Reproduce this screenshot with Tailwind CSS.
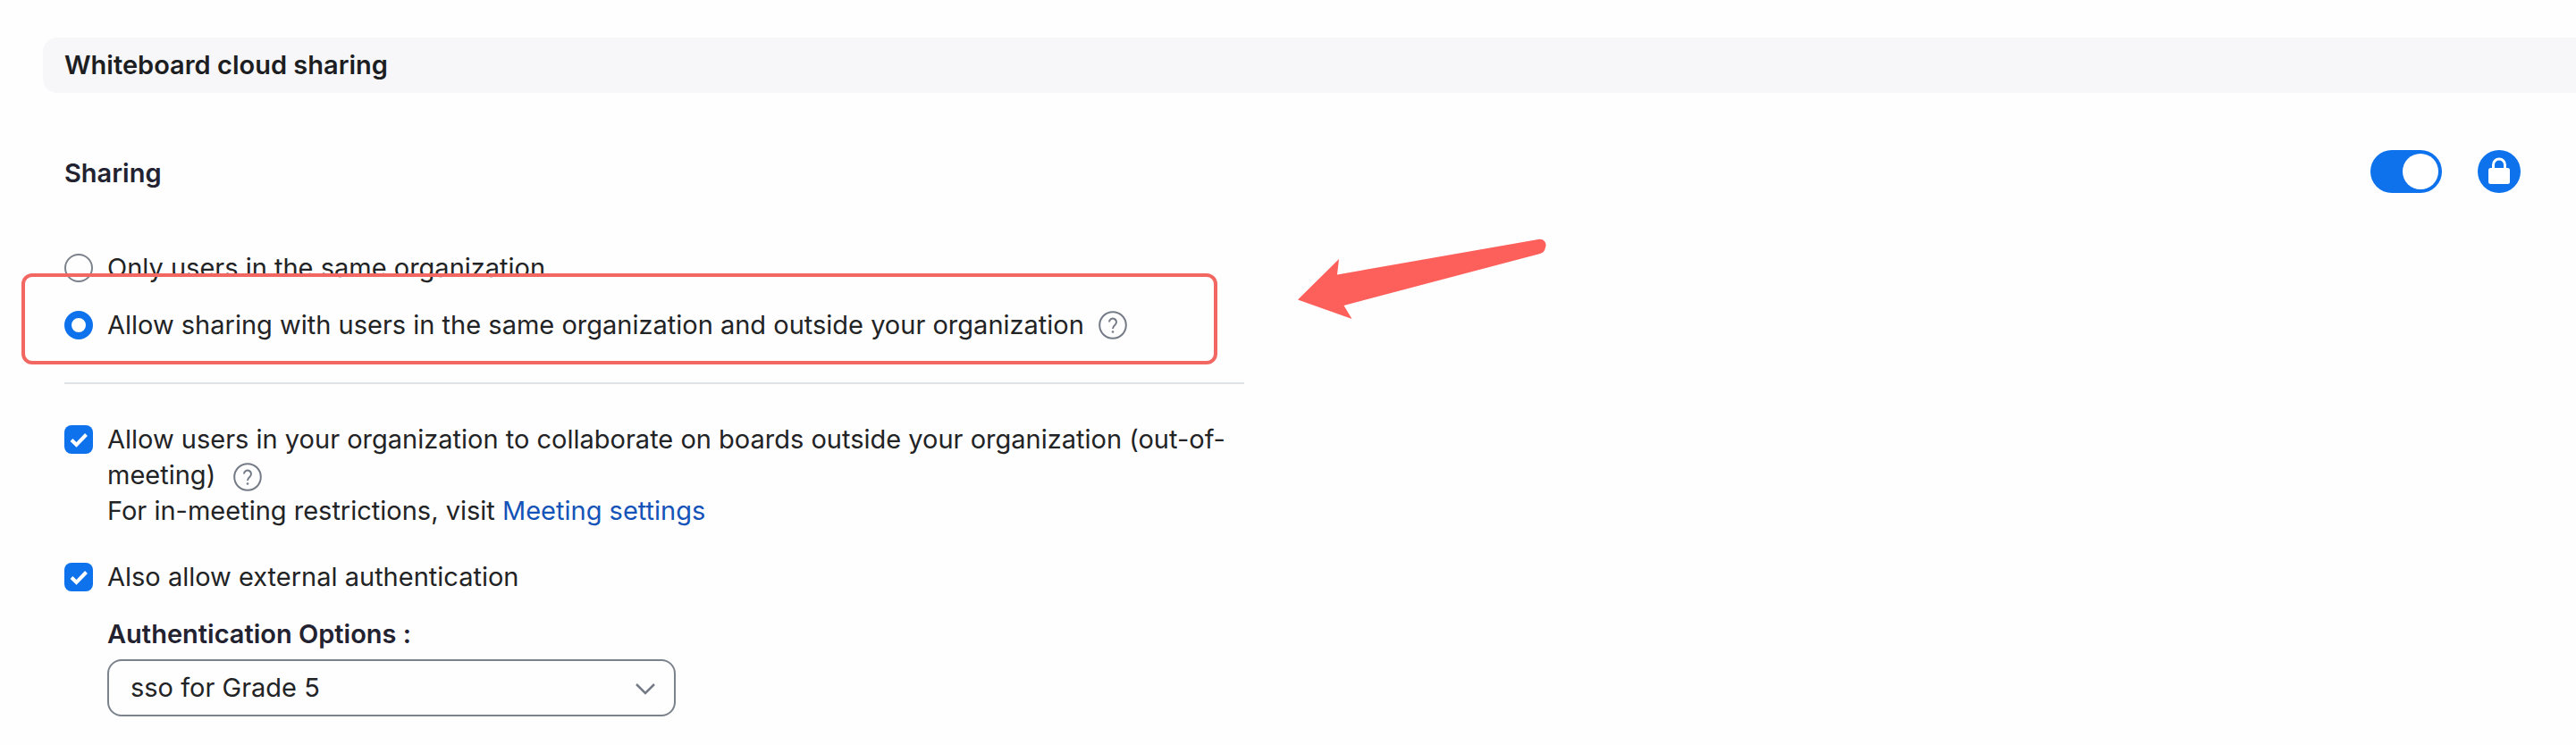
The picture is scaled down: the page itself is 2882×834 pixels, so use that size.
<!DOCTYPE html>
<html lang="en">
<head>
    <meta charset="UTF-8">
    <meta name="viewport" content="width=device-width, initial-scale=1.0">
    <title>Whiteboard cloud sharing</title>
    <script src="https://cdn.jsdelivr.net/npm/@tailwindcss/browser@4"></script>
</head>
<body class="bg-[#fefefe] pt-[42px] pb-8 font-['Inter','Liberation_Sans',sans-serif] text-[29px] leading-10 text-[#222325]">
    <main class="pl-12">
        <h2 class="rounded-l-2xl bg-[#f7f7fa] px-6 py-[11px] font-semibold text-[#1d1e22]">Whiteboard cloud sharing</h2>

        <section class="mt-16 pl-6">
            <div class="flex items-end justify-between pr-[62px]">
                <h3 class="leading-11 font-semibold text-[#222230]">Sharing</h3>
                <div class="flex gap-10">
                    <button type="button" role="switch" aria-checked="true" aria-label="Sharing" class="flex h-12 w-20 items-center justify-end rounded-full bg-[#0e72ed] p-1">
                        <span class="size-10 rounded-full bg-white"></span>
                    </button>
                    <button type="button" aria-label="Lock setting" class="size-12 rounded-full bg-[#0e72ed]">
                        <svg viewBox="0 0 48 48" class="size-12" fill="none">
                            <path d="M17.500 21v-4.500a6.500 6.500 0 0 1 13 0V21" stroke="#fff" stroke-width="3"/>
                            <rect x="12" y="20" width="24" height="18" rx="2.5" fill="#fff"/>
                        </svg>
                    </button>
                </div>
            </div>

            <div class="max-w-[1320px]">
                <div class="relative mt-16 space-y-6">
                    <div class="flex items-center gap-4">
                        <input type="radio" name="scope" id="same-org" class="size-8 shrink-0 appearance-none rounded-full border-2 border-[#7c828c] checked:border-8 checked:border-[#0e72ed]">
                        <label for="same-org">Only users in the same organization</label>
                    </div>
                    <div class="flex items-center gap-4">
                        <input type="radio" name="scope" id="any-org" checked class="size-8 shrink-0 appearance-none rounded-full border-2 border-[#7c828c] checked:border-8 checked:border-[#0e72ed]">
                        <label for="any-org">Allow sharing with users in the same organization and outside your organization</label>
                        <button type="button" aria-label="Help">
                            <svg viewBox="0 0 32 32" class="size-8" fill="none" stroke="#747b87" stroke-width="2">
                                <circle cx="16" cy="16" r="14.8"/>
                                <path d="M12 12.5a4 4 0 1 1 6.500 3.200c-1.700 1.300-2.500 1.900-2.500 4.300"/>
                                <circle cx="16" cy="23.500" r="1.300" fill="#747b87" stroke="none"/>
                            </svg>
                        </button>
                    </div>

                    <!-- callout frame and arrow -->
                    <div class="pointer-events-none absolute top-[26px] -left-12 h-[102px] w-[1338px] rounded-xl border-4 border-[#f26762]"></div>
                    <svg viewBox="0 0 280 92" class="pointer-events-none absolute -top-[14px] left-[1379px] h-[92px] w-[280px]">
                        <path d="M1 69.500 47 24 45 41.500 270 2C276 1 280 6 278 11Q277 16.500 272 18L52.500 76 61.500 91Z" fill="#fd5f5a"/>
                    </svg>
                </div>

                <hr class="mt-11 border-t-2 border-[#dfe3e6]">

                <div class="mt-[42px] flex gap-4">
                    <span class="relative mt-1 size-8 shrink-0">
                        <input type="checkbox" id="collab" checked class="block size-8 appearance-none rounded-lg bg-[#0e72ed]">
                        <svg viewBox="0 0 32 32" class="pointer-events-none absolute inset-0 size-8" fill="none" stroke="#fff" stroke-width="4">
                            <path d="M8 16.500l5.500 5.500L24.500 10.500"/>
                        </svg>
                    </span>
                    <div>
                        <label for="collab">Allow users in your organization to collaborate on boards outside your organization (out-of-meeting)</label>
                        <button type="button" aria-label="Help" class="ml-3 align-middle">
                            <svg viewBox="0 0 32 32" class="size-8" fill="none" stroke="#747b87" stroke-width="2">
                                <circle cx="16" cy="16" r="14.8"/>
                                <path d="M12 12.5a4 4 0 1 1 6.500 3.200c-1.700 1.300-2.500 1.900-2.500 4.300"/>
                                <circle cx="16" cy="23.500" r="1.300" fill="#747b87" stroke="none"/>
                            </svg>
                        </button>
                        <p>For in-meeting restrictions, visit <a href="#" class="text-[#1453b8]">Meeting settings</a></p>
                    </div>
                </div>

                <div class="mt-[34px] flex gap-4">
                    <span class="relative mt-1 size-8 shrink-0">
                        <input type="checkbox" id="external" checked class="block size-8 appearance-none rounded-lg bg-[#0e72ed]">
                        <svg viewBox="0 0 32 32" class="pointer-events-none absolute inset-0 size-8" fill="none" stroke="#fff" stroke-width="4">
                            <path d="M8 16.500l5.500 5.500L24.500 10.500"/>
                        </svg>
                    </span>
                    <label for="external">Also allow external authentication</label>
                </div>

                <div class="mt-6 pl-12">
                    <label for="auth" class="block font-semibold text-[#222230]">Authentication Options :</label>
                    <div class="relative mt-2 max-w-[636px]">
                        <select id="auth" class="block h-16 w-full appearance-none rounded-2xl border-2 border-[#7c828c] bg-transparent px-6">
                            <option>sso for Grade 5</option>
                        </select>
                        <svg viewBox="0 0 24 24" class="pointer-events-none absolute top-5 right-[22px] size-6" fill="none" stroke="#747b87" stroke-width="2.500">
                            <path d="M2 8l10 10L22 8"/>
                        </svg>
                    </div>
                </div>
            </div>
        </section>
    </main>
</body>
</html>
